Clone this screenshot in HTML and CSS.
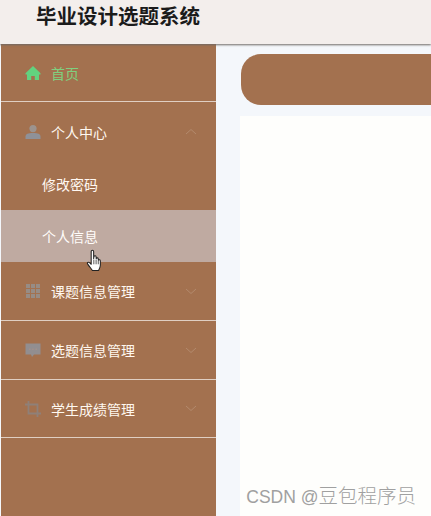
FILE: index.html
```html
<!DOCTYPE html>
<html lang="zh">
<head>
<meta charset="utf-8">
<title>毕业设计选题系统</title>
<link rel="stylesheet" href="styles.css">
</head>
<body>
<header class="topbar"><h1 class="title">毕业设计选题系统</h1></header>
<div class="main">
  <nav class="sidebar">
    <div class="item item-home">
      <svg class="icon" viewBox="0 0 16 16"><path fill="#62d27f" d="M8 1 0.500 8.200V9.500H2v5.500h4.200v-4h3.600v4H14V9.500h1.500V8.200z"/></svg>
      <span class="label-home">首页</span>
    </div>
    <div class="item item-open">
      <svg class="icon" viewBox="0 0 16 16"><circle cx="8" cy="4.600" r="3.600" fill="#9c938e"/><path fill="#8f9198" d="M.5 15v-2.200C.5 10 3 9 8 9s7.500 1 7.500 3.800V15z"/></svg>
      <span class="label">个人中心</span>
      <svg class="chev" viewBox="0 0 12 7"><path d="M1 6 6 1.500 11 6"/></svg>
    </div>
    <div class="sub">修改密码</div>
    <div class="sub sub-active">个人信息<svg class="cursor" viewBox="0 0 18 24"><path fill="#fff" stroke="#222" stroke-width="1.100" stroke-linejoin="round" d="M5.500 2.500c0-1.800 2.600-1.800 2.600 0V10l.3-2.200c.6-1.300 2.300-1 2.300.4l.1 1.800c.4-1.200 2.200-1 2.200.4l.1 1.300c.5-.9 2.100-.6 2.100.7v4.600c0 2.600-1.500 4.400-2 5.700H6.800C5.800 21 3.800 18.800 1.800 15.800c-1-1.500.7-2.700 1.900-1.500l1.800 1.700z"/><path stroke="#222" stroke-width=".8" d="M8.300 11v5M10.700 11v5M13 12v4"/></svg></div>
    <div class="item">
      <svg class="icon" viewBox="0 0 16 16"><path fill="#978c85" d="M1 1h4v4H1zM6 1h4v4H6zM11 1h4v4h-4zM1 6h4v4H1zM6 6h4v4H6zM11 6h4v4h-4zM1 11h4v4H1zM6 11h4v4H6zM11 11h4v4h-4z"/></svg>
      <span class="label">课题信息管理</span>
      <svg class="chev" viewBox="0 0 12 7"><path d="M1 1 6 5.500 11 1"/></svg>
    </div>
    <div class="item">
      <svg class="icon" viewBox="0 0 16 16"><path fill="#928e90" d="M0.500 1.500h15v11H9l-2 2.500-1-2.500H0.500z"/><path fill="#a3908a" d="M4 6.500h1.500V8H4zM7.200 6.500h1.500V8H7.200zM10.500 6.500H12V8h-1.500z"/></svg>
      <span class="label">选题信息管理</span>
      <svg class="chev" viewBox="0 0 12 7"><path d="M1 1 6 5.500 11 1"/></svg>
    </div>
    <div class="item item-last">
      <svg class="icon" viewBox="0 0 16 16"><path fill="none" stroke="#8f8078" stroke-width="1.800" d="M3.500 0v12.500H16M0 3.500h12.500V16"/></svg>
      <span class="label">学生成绩管理</span>
      <svg class="chev" viewBox="0 0 12 7"><path d="M1 1 6 5.500 11 1"/></svg>
    </div>
  </nav>
  <main class="content">
    <div class="banner"></div>
    <div class="panel"><span class="watermark"><span class="wm-latin">CSDN @</span>豆包程序员</span></div>
  </main>
</div>
</body>
</html>
```
FILE: styles.css
```css
* { box-sizing: border-box; }
html, body { margin: 0; height: 100%; overflow: hidden; }
body {
  width: 431px;
  height: 516px;
  display: flex;
  flex-direction: column;
  font-family: "Noto Sans CJK SC", "Liberation Sans", sans-serif;
  background: #f4f7fb;
}
.topbar {
  height: 44px;
  flex: none;
  background: #f3eeec;
  box-shadow: 0 1px 2px #6f6965;
  position: relative;
  z-index: 1;
  padding: 0 0 0 36px;
}
.title {
  margin: 0;
  font-size: 20.5px;
  line-height: 30px;
  font-weight: 700;
  color: #1b1b1b;
}
.main { flex: 1; display: flex; min-height: 0; }
.sidebar {
  width: 215px;
  flex: none;
  margin-left: 1px;
  background: #a3714f;
}
.item {
  height: 59px;
  display: flex;
  align-items: center;
  padding: 0 19px 0 24px;
  border-bottom: 1px solid #e0cfc3;
  font-size: 14px;
  font-weight: 400;
  color: #fff8f0;
}
.item-home { height: 58px; }
.item-open { height: 56px; border-bottom: 0; padding-top: 3px; }
.item-last { height: 58px; }
.icon { width: 16px; height: 16px; flex: none; margin-right: 10px; }
.label-home { color: #7fd07f; }
.label { flex: 1; }
.chev { width: 12px; height: 7px; flex: none; fill: none; stroke: #b38a6d; stroke-width: 1; }
.sub {
  height: 52px;
  padding-left: 41px;
  display: flex;
  align-items: center;
  font-size: 14px;
  font-weight: 400;
  color: #fff8f2;
  position: relative;
}
.sub-active { background: #bfaaa1; color: #fffdfb; }
.cursor { position: absolute; left: 85px; top: 39px; width: 17px; height: 23px; }
.content {
  flex: 1;
  min-width: 0;
  padding: 10px 0 0 24px;
  display: flex;
  flex-direction: column;
  gap: 11px;
}
.banner {
  height: 51px;
  flex: none;
  margin-left: 1px;
  background: #a3714f;
  border-radius: 20px 0 0 20px;
}
.panel {
  flex: 1;
  background: #fefefc;
  position: relative;
}
.watermark {
  position: absolute;
  right: 15px;
  bottom: 7px;
  font-size: 19.5px;
  line-height: 24px;
  font-weight: 300;
  color: #a0a0a0;
  white-space: nowrap;
}
.wm-latin { font-family: "Liberation Sans", sans-serif; font-size: 17.5px; }
```
